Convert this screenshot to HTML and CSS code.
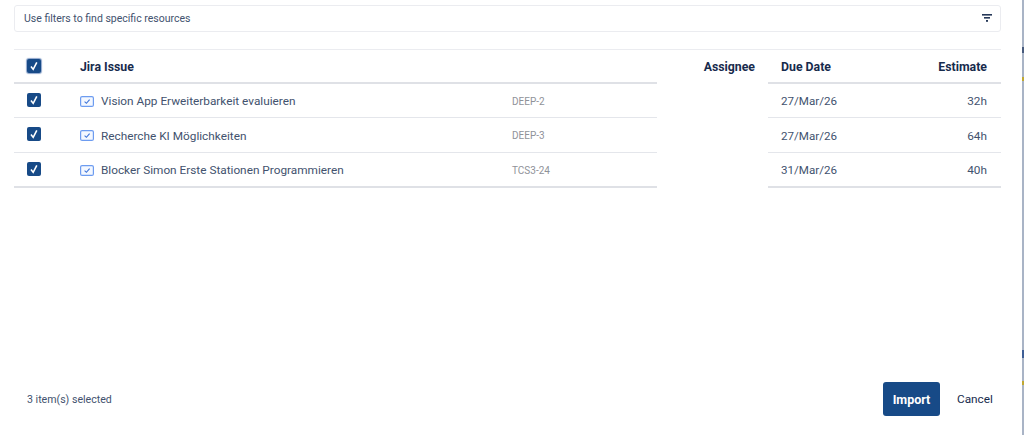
FILE: index.html
```html
<!DOCTYPE html>
<html lang="en">
<head>
  <meta charset="UTF-8">
  <title>Import Jira Issues</title>
  <link rel="stylesheet" href="styles.css">
</head>
<body>

<div class="dialog">
  <div class="filter-bar">
    <span>Use filters to find specific resources</span>
    <svg class="filter-icon" width="10" height="8" viewBox="0 0 10 8">
      <rect x="0" y="0" width="10" height="1.6" fill="#253858"/>
      <rect x="2" y="3" width="6" height="1.6" fill="#253858"/>
      <rect x="4" y="6" width="2" height="1.8" fill="#253858"/>
    </svg>
  </div>

  <table class="issues">
    <thead>
      <tr>
        <th class="col-check"><span class="checkbox focused"><svg width="12" height="12" viewBox="0 0 12 12"><path d="M3 6.6 L5.2 9.4 L8.8 2.4" fill="none" stroke="#fff" stroke-width="1.6"/></svg></span></th>
        <th class="col-issue">Jira Issue</th>
        <th class="col-key"></th>
        <th class="col-assignee">Assignee</th>
        <th class="col-due">Due Date</th>
        <th class="col-estimate">Estimate</th>
      </tr>
    </thead>
    <tbody>
      <tr>
        <td><span class="checkbox"><svg width="12" height="12" viewBox="0 0 12 12"><path d="M3 6.6 L5.2 9.4 L8.8 2.4" fill="none" stroke="#fff" stroke-width="1.6"/></svg></span></td>
        <td><div class="issue-name"><svg class="type-icon" width="14" height="11" viewBox="0 0 14 11"><rect x="0.6" y="0.6" width="12.8" height="9.8" rx="1.5" fill="#f4f8ff" stroke="#6d9cf0" stroke-width="1.2"/><path d="M4.6 5.6 L6.4 7.3 L9.6 3.6" fill="none" stroke="#3f74d8" stroke-width="1.1"/></svg>Vision App Erweiterbarkeit evaluieren</div></td>
        <td class="issue-key">DEEP-2</td>
        <td class="no-line"></td>
        <td class="due">27/Mar/26</td>
        <td class="estimate">32h</td>
      </tr>
      <tr class="row-tall">
        <td><span class="checkbox"><svg width="12" height="12" viewBox="0 0 12 12"><path d="M3 6.6 L5.2 9.4 L8.8 2.4" fill="none" stroke="#fff" stroke-width="1.6"/></svg></span></td>
        <td><div class="issue-name"><svg class="type-icon" width="14" height="11" viewBox="0 0 14 11"><rect x="0.6" y="0.6" width="12.8" height="9.8" rx="1.5" fill="#f4f8ff" stroke="#6d9cf0" stroke-width="1.2"/><path d="M4.6 5.6 L6.4 7.3 L9.6 3.6" fill="none" stroke="#3f74d8" stroke-width="1.1"/></svg>Recherche KI Möglichkeiten</div></td>
        <td class="issue-key">DEEP-3</td>
        <td class="no-line"></td>
        <td class="due">27/Mar/26</td>
        <td class="estimate">64h</td>
      </tr>
      <tr>
        <td><span class="checkbox"><svg width="12" height="12" viewBox="0 0 12 12"><path d="M3 6.6 L5.2 9.4 L8.8 2.4" fill="none" stroke="#fff" stroke-width="1.6"/></svg></span></td>
        <td><div class="issue-name"><svg class="type-icon" width="14" height="11" viewBox="0 0 14 11"><rect x="0.6" y="0.6" width="12.8" height="9.8" rx="1.5" fill="#f4f8ff" stroke="#6d9cf0" stroke-width="1.2"/><path d="M4.6 5.6 L6.4 7.3 L9.6 3.6" fill="none" stroke="#3f74d8" stroke-width="1.1"/></svg>Blocker Simon Erste Stationen Programmieren</div></td>
        <td class="issue-key">TCS3-24</td>
        <td class="no-line"></td>
        <td class="due">31/Mar/26</td>
        <td class="estimate">40h</td>
      </tr>
    </tbody>
  </table>

  <div class="footer">
    <span class="selected-count">3 item(s) selected</span>
    <div class="actions">
      <button class="btn-import">Import</button>
      <button class="btn-cancel">Cancel</button>
    </div>
  </div>
</div>

<div class="edge-strip"></div>

</body>
</html>
```

FILE: styles.css
```css
html, body {
  height: 100%;
}
body {
  display: flex;
  margin: 0;
  height: 435px;
  overflow: hidden;
  background: #fff;
  color: #42526e;
  font-family: Roboto, Arial, sans-serif;
  font-size: 11.8px;
}
.dialog {
  flex: 1;
  display: flex;
  flex-direction: column;
  padding: 5px 21px 19px 14px;
}
.edge-strip {
  width: 2px;
  background: linear-gradient(to bottom,
    #a9b4c6 0, #a9b4c6 47px,
    #46597c 47px, #46597c 53px,
    #a9b4c6 53px, #a9b4c6 77px,
    #c0a832 77px, #c0a832 81px,
    #a9b4c6 81px, #a9b4c6 350px,
    #3f5f96 350px, #3f5f96 358px,
    #a9b4c6 358px, #a9b4c6 381px,
    #c0a832 381px, #c0a832 385px,
    #a9b4c6 385px);
}
.filter-bar {
  display: flex;
  justify-content: space-between;
  align-items: center;
  box-sizing: border-box;
  height: 27px;
  padding: 0 8px 1px 9px;
  border: 1px solid #ebecf0;
  border-radius: 3px;
  font-size: 10.5px;
  color: #42526e;
}
.filter-icon {
  display: block;
}
.issues {
  width: 987px;
  margin-top: 17px;
  border-collapse: collapse;
  table-layout: fixed;
  border-top: 1px solid #ebecf0;
}
.issues th {
  height: 31px;
  padding: 1px 13px 0;
  border-bottom: 2px solid #dfe1e6;
  color: #172b4d;
  font-size: 12.3px;
  font-weight: 700;
  text-align: left;
}
.issues td {
  height: 32px;
  padding: 1px 13px 0;
  border-bottom: 1px solid #e4e6eb;
}
.issues .row-tall td {
  height: 33px;
}
.issues tbody tr:last-child td {
  border-bottom: 2px solid #dfe1e6;
}
.issues th.col-assignee,
.issues tbody tr td.no-line {
  border-bottom: none;
}
.col-check { width: 27px; }
.col-key { width: 132px; }
.col-assignee { width: 85px; }
.col-due { width: 95px; }
.col-estimate { width: 85px; }
.issues .col-assignee,
.issues .col-estimate,
.issues .estimate {
  text-align: right;
}
.issues .col-estimate,
.issues .estimate {
  padding-right: 14px;
}
.checkbox {
  display: flex;
  align-items: center;
  justify-content: center;
  width: 14px;
  height: 14px;
  margin-bottom: 3px;
  border-radius: 2px;
  background: #174a87;
}
.checkbox.focused {
  margin-bottom: 2px;
  box-shadow: 0 0 1px 1px #8ea6cc;
}
.issue-name {
  display: flex;
  align-items: center;
  gap: 7px;
}
.issue-key {
  color: #8f9299;
  font-size: 10px;
}
.due {
  font-size: 11.6px;
}
.footer {
  margin-top: auto;
  display: flex;
  justify-content: space-between;
  align-items: center;
  padding-left: 13px;
}
.selected-count {
  padding-top: 1px;
  font-size: 10.6px;
}
.actions {
  display: flex;
  align-items: center;
  gap: 17px;
}
.actions button {
  font-family: inherit;
  border: none;
  border-radius: 3px;
  height: 34px;
  cursor: pointer;
}
.btn-import {
  width: 57px;
  padding: 0;
  background: #174a87;
  color: #fff;
  font-size: 12.5px;
  font-weight: 700;
}
.btn-cancel {
  width: 44px;
  padding: 0;
  background: none;
  color: #172b4d;
  font-size: 11.8px;
  text-align: left;
}
```
